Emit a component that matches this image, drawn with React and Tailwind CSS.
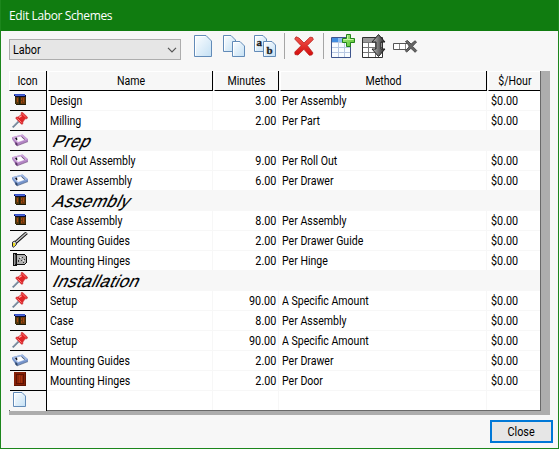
import React from "react";

const CabinetIcon = () => (
  <svg width="16" height="16" viewBox="0 0 16 16" shapeRendering="crispEdges">
    <path d="M3 4h11v9H4v-1H3z" fill="#3d2d0a" />
    <path d="M4 5h4v7H4z" fill="#55380c" />
    <path d="M9 5h4v7H9z" fill="#6b380c" />
    <path d="M9 6h1v2H9zM11 6h1v4h-1zM5 6h1v4H5zM9 9h1v2H9z" fill="#a5460e" />
    <path d="M7 5h1v8H7zM4 12h10v1H4z" fill="#1e1c08" />
    <path d="M2 2h11v1H2z" fill="#3450c8" />
    <path d="M3 3h10v1H3z" fill="#4a64dc" />
    <path d="M2 3h1v1H2zM3 4h11v1H3zM13 3h1v1h-1z" fill="#0c0c30" />
  </svg>
);

const PinIcon = () => (
  <svg width="16" height="16" viewBox="0 0 16 16">
    <path d="M0.7 15.3 6.5 9.5" stroke="#6f8296" strokeWidth="1.8" />
    <path d="M1 14.2 6 9.2" stroke="#c2ced8" strokeWidth="0.6" />
    <path d="M4 5.2 6 5 9.3 2.5 9 .8 10.4.2 15.6 5.3 15 6.8 13.2 6.8 10.9 10 10.8 12 9.5 12.3 3.9 6.6z" fill="#e02427" stroke="#c5353a" strokeWidth=".6" />
    <path d="M10 1.5 14 5.6M5.4 6.4 9.6 10.6" stroke="#ff7775" strokeWidth="1" />
    <path d="m7 5.6 2.6-1.8" stroke="#ffaaa5" strokeWidth="1.2" />
  </svg>
);

const DrawerIcon = ({ light, mid, dark }) => (
  <svg width="16" height="16" viewBox="0 0 16 16">
    <path d="M0 5.2 10.5 2.5 16 7.3V9.6L5.2 13.8 3.6 12.5 0 7z" fill={mid} />
    <path d="M0 5.2 10.5 2.5 16 7.3 5.2 11z" fill={light} />
    <path d="M2.8 6.1 9.8 4.3 13.2 7.5 6 9.9z" fill="#fff" />
    <path d="M2.8 6.1 5 5.6 5.4 8 4.6 8.2z" fill="#101018" />
    <path d="m9 4.5.8-.2 3.4 3.2-.9.3z" fill={dark} />
    <path d="M3.6 10.3 5.2 11.6 5.2 13.8 3.6 12.4zM5.2 13.8 16 9.6" fill={dark} stroke={dark} strokeWidth=".5" />
  </svg>
);

const GuideIcon = () => (
  <svg width="16" height="16" viewBox="0 0 16 16">
    <path d="M2.5 11.5 14.7.8" stroke="#111" strokeWidth="3.3" />
    <path d="M3 11 14.6.8" stroke="#c4c4c4" strokeWidth="1.5" />
    <path d="M.5 10.2 2.8 9l1.6 1.8-.2 2-3 2.5L.5 14.3z" fill="#ddd" stroke="#111" strokeWidth=".9" />
    <path d="M1 11h2v3H1z" fill="#f0e020" />
  </svg>
);

const HingeIcon = () => (
  <svg width="16" height="16" viewBox="0 0 16 16" shapeRendering="crispEdges">
    <path d="M1 1h4v1h8v1h1v1h1v7h-1v1h-1v1H5v1H1z" fill="#101010" />
    <path d="M2 2h1v11H2z" fill="#999" />
    <path d="M5 3h8v1h1v7h-1v1H5z" fill="#b0b0b0" />
    <path d="M3 3h1v9H3z" fill="#555" />
    <path d="M6 8h1v2H6zM7 6h1v1H7zM10 5h1v1h-1zM12 7h1v1h-1zM9 8h1v1H9zM11 10h1v1h-1z" fill="#333" />
    <path d="M8 5h1v1H8zM11 8h1v1h-1z" fill="#eee" />
  </svg>
);

const DoorIcon = () => (
  <svg width="16" height="16" viewBox="0 0 16 16" shapeRendering="crispEdges">
    <path d="M2 0h12v14H2z" fill="#842008" />
    <path d="M4 2h8v10H4z" fill="#5e1203" />
    <path d="M5 3h6v8H5z" fill="#8c2408" />
    <path d="M7 3h1v8H7zM9 4h1v7H9z" fill="#a63310" />
    <path d="M2 13h12v1H2zM13 0h1v14h-1z" fill="#5e1503" />
  </svg>
);

const Sheet = ({ x = 0, y = 0, w, h, f }) => (
  <g transform={`translate(${x} ${y})`}>
    <path d={`M.5.5H${w - f}L${w - 0.5} ${f}V${h - 0.5}H.5z`} fill="url(#paper)" stroke="#628bb8" />
    <path d={`M${w - f}.5V${f}H${w - 0.5}z`} fill="#b7d3e8" stroke="#789fc5" strokeWidth=".8" />
    <path d={`M1.5 ${h - 1.5}V1.5H${w - f - 1}`} fill="none" stroke="#fff" />
  </g>
);

const PaperDefs = () => (
  <defs>
    <linearGradient id="paper" x2="1" y2="1">
      <stop stopColor="#fdfeff" />
      <stop offset="1" stopColor="#c4e0f4" />
    </linearGradient>
    <linearGradient id="red" x2="0" y2="1">
      <stop stopColor="#f0574e" />
      <stop offset="1" stopColor="#d40b0b" />
    </linearGradient>
    <linearGradient id="steel" x2="1">
      <stop stopColor="#bbb" />
      <stop offset="1" stopColor="#2a2a2a" />
    </linearGradient>
    <linearGradient id="plus" x2="1" y2="1">
      <stop stopColor="#b5f08a" />
      <stop offset="1" stopColor="#4fc02c" />
    </linearGradient>
  </defs>
);

const NewRowIcon = () => (
  <svg width="16" height="16" viewBox="0 0 16 16">
    <PaperDefs />
    <Sheet x={1} w={13} h={15} f={4} />
  </svg>
);

const icons = {
  cabinet: <CabinetIcon />,
  pin: <PinIcon />,
  purple: <DrawerIcon light="#cfa6dc" mid="#b084c2" dark="#5d3568" />,
  blue: <DrawerIcon light="#a0b9e4" mid="#7592c8" dark="#304767" />,
  guide: <GuideIcon />,
  hinge: <HingeIcon />,
  door: <DoorIcon />,
  page: <NewRowIcon />,
};

const rows = [
  ["cabinet", "Design", "3.00", "Per Assembly"],
  ["pin", "Milling", "2.00", "Per Part"],
  ["purple", "Prep"],
  ["purple", "Roll Out Assembly", "9.00", "Per Roll Out"],
  ["blue", "Drawer Assembly", "6.00", "Per Drawer"],
  ["cabinet", "Assembly"],
  ["cabinet", "Case Assembly", "8.00", "Per Assembly"],
  ["guide", "Mounting Guides", "2.00", "Per Drawer Guide"],
  ["hinge", "Mounting Hinges", "2.00", "Per Hinge"],
  ["pin", "Installation"],
  ["pin", "Setup", "90.00", "A Specific Amount"],
  ["cabinet", "Case", "8.00", "Per Assembly"],
  ["pin", "Setup", "90.00", "A Specific Amount"],
  ["blue", "Mounting Guides", "2.00", "Per Drawer"],
  ["door", "Mounting Hinges", "2.00", "Per Door"],
];

// Condensed label text; the origin class keeps the aligned edge fixed.
const Label = ({ children, className = "origin-left scale-x-[0.88]" }) => (
  <span className={`inline-block whitespace-nowrap ${className}`}>{children}</span>
);

const HeaderCell = ({ children, className }) => (
  <div className={`flex h-5 shrink-0 items-center justify-center border-b border-l border-t border-b-black border-l-white border-t-white ${className}`}>
    <Label className="origin-center scale-x-[0.88]">{children}</Label>
  </div>
);

const HeaderRule = () => <div className="h-5 w-px shrink-0 bg-black" />;

const IconCell = ({ name }) => (
  <div className={`h-5 w-[37px] shrink-0 border-r border-r-black bg-[#f7f7f7] pl-[2px] pt-px ${name === "page" ? "" : "border-b border-b-black"}`}>
    {icons[name]}
  </div>
);

function Toolbar() {
  return (
    <div className="flex h-[39px] items-start pl-2 pt-0.5">
      <div className="mt-[6px] flex h-[21px] w-[172px] shrink-0 items-center justify-between border border-[#adadad] bg-[#e6e6e6] pl-[3px] pr-[3px]">
        <Label className="origin-left scale-x-[0.9]">Labor</Label>
        <svg width="10" height="6" viewBox="0 0 10 6">
          <path d="m1 .8 4 4 4-4" fill="none" stroke="#555" strokeWidth="1.2" />
        </svg>
      </div>
      <svg className="ml-[13px] mt-0.5 shrink-0" width="19" height="23">
        <Sheet w={18} h={22} f={6} />
      </svg>
      <svg className="ml-[10px] mt-0.5 shrink-0" width="23" height="23">
        <Sheet w={13} h={17} f={5} />
        <Sheet x={9} y={6} w={13} h={16} f={5} />
      </svg>
      <svg className="ml-2 mt-0.5 shrink-0" width="23" height="23">
        <Sheet w={13} h={17} f={4} />
        <Sheet x={9} y={6} w={13} h={16} f={4} />
        <text x="2.5" y="11" fontSize="11" fontWeight="700" fontFamily="Liberation Serif, serif" fill="#222" stroke="#222" strokeWidth=".3">a</text>
        <text x="12.5" y="19" fontSize="11" fontWeight="700" fontFamily="Liberation Serif, serif" fill="#222" stroke="#222" strokeWidth=".3">b</text>
      </svg>
      <div className="ml-[7px] h-[26px] w-px shrink-0 bg-[#a5a5a5]" />
      <svg className="ml-[9px] mt-[3px] shrink-0" width="20" height="20" viewBox="0 0 20 20">
        <path d="M.7 3 2 .8 5 2 10 7l6-5.8 2.5.3.8 2-6 6L19 17l-1.2 2-2.5.3-5.4-6L4 19l-3-.5L.8 16l6.3-6.3z" fill="url(#red)" stroke="#b9201d" strokeWidth=".8" />
      </svg>
      <div className="ml-[9px] h-[26px] w-px shrink-0 bg-[#a5a5a5]" />
      <svg className="ml-[7px] mt-px shrink-0" width="24" height="24" viewBox="0 0 24 24">
        <path d="M.5 3.5h19v20H.5z" fill="#f9fcff" stroke="#3f558d" />
        <path d="M1 4h18v4H1z" fill="#8fbdf2" />
        <path d="M1 4h6v4H1z" fill="#438de0" />
        <path d="M1 8.5h18M1 13.5h18M1 18.5h18M7.5 8v15M13.5 8v15" stroke="#b8c8e2" />
        <path d="M15.5.5h4v4h4v4h-4v4h-4v-4h-4v-4h4z" fill="url(#plus)" stroke="#23851b" />
        <path d="M16.5 1.5v4h-4M17 5.5h5.5" fill="none" stroke="#caf7a6" />
      </svg>
      <svg className="ml-[7px] mt-px shrink-0" width="24" height="24" viewBox="0 0 24 24">
        <path d="M.5 3.5h20v20H.5z" fill="#fff" stroke="#303030" />
        <path d="M1 4h19v4H1z" fill="#999" />
        <path d="M1 8.5h19M1 13.5h19M1 18.5h19M6.5 8v15M13.5 8v15" stroke="#777" />
        <path d="m16.5.5 6.5 7.5h-4v7h4l-6.5 7.5-6.5-7.5h4V8h-4z" fill="url(#steel)" stroke="#222" />
      </svg>
      <svg className="ml-[7px] mt-[7px] shrink-0" width="25" height="13" viewBox="0 0 25 13">
        <path d="M.5 3.5H16v6H.5z" fill="#fff" stroke="#555" />
        <path d="M6.5 4v5M12.5 4v5" stroke="#888" />
        <path d="m12.5 1.5 2-1 3.6 3.6L22 .8l1.5 1.2-4 4.3 4.2 4.2-1.5 1.8-4.3-4-4.3 3.8-1.2-1.4 4.2-4.4z" fill="#666" stroke="#4b4b4b" strokeWidth="1" />
      </svg>
    </div>
  );
}

export default function App() {
  return (
    <div className="flex h-[449px] w-[559px] flex-col border border-t-0 border-[#1c861c] bg-[#f7f7f7] font-[Roboto,sans-serif] text-[12px] leading-[18px] text-black">
      <div className="h-[31px] shrink-0 bg-[#107c10] pl-2 pt-[7px] font-['Open_Sans',sans-serif] text-[12px] text-white">
        <span className="tracking-[-0.38px]">Edit Labor Schemes</span>
      </div>
      <Toolbar />
      <div className="ml-2 mt-px flex h-[344px] w-[541px] shrink-0 bg-[#adadad]">
        <div className="flex h-[340px] w-[532px] flex-col border-b border-r border-[#696969]">
          <div className="flex h-5 shrink-0 bg-[#f7f7f7]">
            <HeaderCell className="w-[37px]">Icon</HeaderCell>
            <HeaderRule />
            <HeaderCell className="ml-px w-[164px]">Name</HeaderCell>
            <HeaderRule />
            <HeaderCell className="ml-px w-[64px]">Minutes</HeaderCell>
            <HeaderRule />
            <HeaderCell className="ml-px w-[206px]">Method</HeaderCell>
            <HeaderRule />
            <HeaderCell className="ml-px w-[52px]">$/Hour</HeaderCell>
          </div>
          {rows.map(([icon, name, minutes, method], i) => (
            <div key={i} className="flex h-5 shrink-0 bg-[#f7f7f7] pl-px">
              <IconCell name={icon} />
              {minutes ? (
                <div className="flex h-[19px] grow gap-px bg-[#f7f7f7] leading-5">
                  <div className="w-[165px] bg-white pl-[3px]"><Label>{name}</Label></div>
                  <div className="w-[65px] bg-white pr-[2px] text-right"><Label className="origin-right scale-x-[0.9]">{minutes}</Label></div>
                  <div className="w-[207px] bg-white pl-[3px]"><Label>{method}</Label></div>
                  <div className="grow bg-white pl-1"><Label className="origin-left scale-x-[0.9]">$0.00</Label></div>
                </div>
              ) : (
                <div className="pl-[7px] text-[17px] leading-[21px]">
                  <span className="inline-block -skew-x-[26deg] font-['Liberation_Sans',sans-serif] tracking-[0.4px] [-webkit-text-stroke:0.15px_black]">{name}</span>
                </div>
              )}
            </div>
          ))}
          <div className="flex h-[19px] shrink-0 bg-[#f7f7f7] pl-px">
            <IconCell name="page" />
            <div className="flex grow gap-px">
              <div className="w-[165px] bg-white" />
              <div className="w-[65px] bg-white" />
              <div className="w-[207px] bg-white" />
              <div className="grow bg-white" />
            </div>
          </div>
        </div>
      </div>
      <button className="ml-[489px] mt-[5px] h-[23px] w-[63px] shrink-0 border-2 border-[#0078d7] bg-[#e6e6e6] leading-[18px]"><Label className="origin-center scale-x-[0.9]">Close</Label></button>
    </div>
  );
}
